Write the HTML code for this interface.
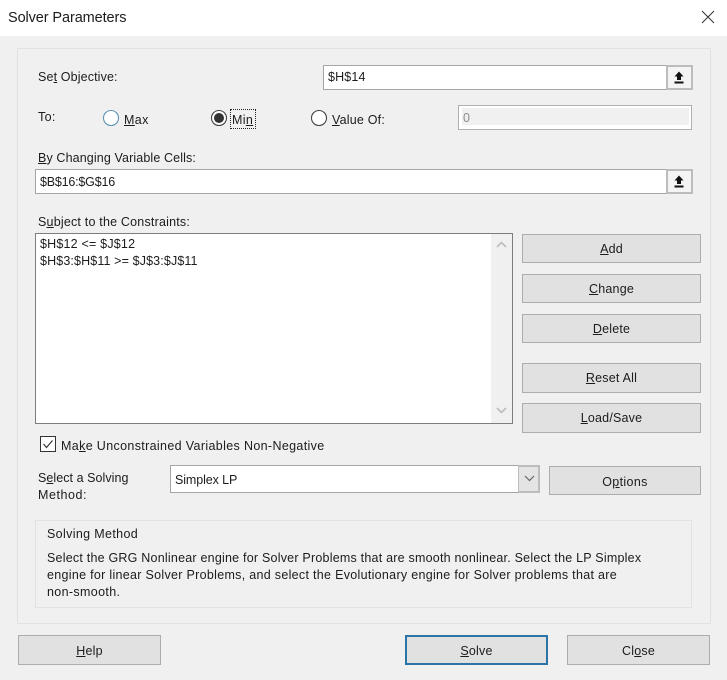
<!DOCTYPE html>
<html><head><meta charset="utf-8"><style>
html,body{margin:0;padding:0}
body{width:727px;height:680px;overflow:hidden;background:#f0f0f0;position:relative;font-family:"Liberation Sans",sans-serif;font-size:12.5px;color:#1c1c1c}
.b,.t,.btn{position:absolute;box-sizing:border-box}
.t{white-space:nowrap;line-height:16px;letter-spacing:.35px}
.in{background:#fff;border:1px solid #a5a5a5}
.btn{background:#e1e1e1;border:1px solid #adadad;text-align:center;letter-spacing:.2px;white-space:nowrap}
u{text-underline-offset:1px}
svg{position:absolute;display:block}
</style></head><body>
<div class="b" style="left:0;top:0;width:727px;height:36px;background:#fff"></div>
<div class="t" style="left:8px;top:9px;font-size:14.5px;line-height:18px;letter-spacing:-.1px">Solver Parameters</div>
<svg style="left:700px;top:9px" width="16" height="16" viewBox="0 0 16 16"><path d="M2 2L14 14M14 2L2 14" stroke="#333" stroke-width="1" fill="none"/></svg>
<div class="b" style="left:17px;top:48px;width:694px;height:576px;border:1px solid #e2e2e2"></div>

<div class="t" style="left:38px;top:69px;letter-spacing:.13px">Se<u>t</u> Objective:</div>
<div class="b in" style="left:323px;top:65px;width:369px;height:25px"></div>
<div class="t" style="left:328px;top:69px;letter-spacing:.15px">$H$14</div>
<div class="b" style="left:666px;top:65px;width:27px;height:25px;background:#f4f4f4;border:2px solid #bcbcbc"></div>
<svg style="left:672px;top:70px" width="14" height="15" viewBox="0 0 14 15"><path d="M7 1.5L11.5 6.5H9V10H5V6.5H2.5Z" fill="#111"/><rect x="2.5" y="11.5" width="9" height="2" fill="#111"/></svg>

<div class="t" style="left:38px;top:109px">To:</div>
<svg style="left:102px;top:109px" width="18" height="18"><circle cx="9" cy="9" r="7.5" fill="#fff" stroke="#5f93b5" stroke-width="1.1"/></svg>
<div class="t" style="left:124px;top:112px"><u>M</u>ax</div>
<svg style="left:210px;top:109px" width="18" height="18"><circle cx="9" cy="9" r="7.5" fill="#fff" stroke="#444" stroke-width="1.1"/><circle cx="9" cy="9" r="5" fill="#333"/></svg>
<div class="b" style="left:230px;top:109px;width:26px;height:20px;border:1px dotted #222"></div>
<div class="t" style="left:232px;top:112px">Mi<u>n</u></div>
<svg style="left:310px;top:109px" width="18" height="18"><circle cx="9" cy="9" r="7.5" fill="#fff" stroke="#444" stroke-width="1.1"/></svg>
<div class="t" style="left:332px;top:112px;letter-spacing:.2px"><u>V</u>alue Of:</div>
<div class="b" style="left:458px;top:105px;width:234px;height:25px;background:#fff;border:1px solid #b0b0b0"></div>
<div class="b" style="left:462px;top:108px;width:227px;height:17px;background:#f0f0f0"></div>
<div class="t" style="left:463px;top:110px;color:#8d8d8d">0</div>

<div class="t" style="left:38px;top:150px;letter-spacing:.12px"><u>B</u>y Changing Variable Cells:</div>
<div class="b in" style="left:35px;top:169px;width:657px;height:25px"></div>
<div class="t" style="left:40px;top:174px;letter-spacing:-.2px">$B$16:$G$16</div>
<div class="b" style="left:666px;top:169px;width:27px;height:25px;background:#f4f4f4;border:2px solid #bcbcbc"></div>
<svg style="left:672px;top:174px" width="14" height="15" viewBox="0 0 14 15"><path d="M7 1.5L11.5 6.5H9V10H5V6.5H2.5Z" fill="#111"/><rect x="2.5" y="11.5" width="9" height="2" fill="#111"/></svg>

<div class="t" style="left:38px;top:214px;letter-spacing:.2px">S<u>u</u>bject to the Constraints:</div>
<div class="b" style="left:35px;top:233px;width:478px;height:191px;background:#fff;border:1px solid #7d7d7d"></div>
<div class="b" style="left:491px;top:234px;width:21px;height:189px;background:#f0f0f0"></div>
<svg style="left:495px;top:240px" width="13" height="10"><path d="M2 7L6.5 2.5L11 7" fill="none" stroke="#bcbcbc" stroke-width="1.6"/></svg>
<svg style="left:495px;top:405px" width="13" height="10"><path d="M2 3L6.5 7.5L11 3" fill="none" stroke="#bcbcbc" stroke-width="1.6"/></svg>
<div class="t" style="left:40px;top:236px;letter-spacing:.2px">$H$12 &lt;= $J$12</div>
<div class="t" style="left:40px;top:253px;letter-spacing:.13px">$H$3:$H$11 &gt;= $J$3:$J$11</div>

<div class="btn" style="left:522px;top:234px;width:179px;height:29px;line-height:29px"><u>A</u>dd</div>
<div class="btn" style="left:522px;top:274px;width:179px;height:29px;line-height:29px"><u>C</u>hange</div>
<div class="btn" style="left:522px;top:314px;width:179px;height:29px;line-height:29px"><u>D</u>elete</div>
<div class="btn" style="left:522px;top:363px;width:179px;height:30px;line-height:29px"><u>R</u>eset All</div>
<div class="btn" style="left:522px;top:403px;width:179px;height:30px;line-height:29px"><u>L</u>oad/Save</div>

<div class="b" style="left:40px;top:436px;width:16px;height:16px;background:#fff;border:1px solid #333"></div>
<svg style="left:40px;top:436px" width="16" height="16"><path d="M3.5 8L6.5 11.5L12.5 4.5" fill="none" stroke="#333" stroke-width="1.2"/></svg>
<div class="t" style="left:61px;top:438px">Ma<u>k</u>e Unconstrained Variables Non-Negative</div>

<div class="t" style="left:38px;top:470px;letter-spacing:.05px">S<u>e</u>lect a Solving</div>
<div class="t" style="left:38px;top:487px;letter-spacing:.55px">Method:</div>
<div class="b in" style="left:170px;top:465px;width:370px;height:28px"></div>
<div class="t" style="left:175px;top:472px;letter-spacing:-.1px">Simplex LP</div>
<div class="b" style="left:518px;top:465px;width:22px;height:28px;background:#e4e4e4;border:2px solid #bcbcbc;border-left:1px solid #bcbcbc"></div>
<svg style="left:523px;top:474px" width="13" height="9"><path d="M2 2L6.5 6.5L11 2" fill="none" stroke="#666" stroke-width="1.2"/></svg>
<div class="btn" style="left:549px;top:466px;width:152px;height:29px;line-height:30px;letter-spacing:.35px">O<u>p</u>tions</div>

<div class="b" style="left:35px;top:520px;width:657px;height:88px;border:1px solid #e2e2e2"></div>
<div class="t" style="left:47px;top:526px">Solving Method</div>
<div class="t" style="left:47px;top:550px;letter-spacing:.22px">Select the GRG Nonlinear engine for Solver Problems that are smooth nonlinear. Select the LP Simplex</div>
<div class="t" style="left:47px;top:567px;letter-spacing:.3px">engine for linear Solver Problems, and select the Evolutionary engine for Solver problems that are</div>
<div class="t" style="left:47px;top:584px">non-smooth.</div>

<div class="btn" style="left:18px;top:635px;width:143px;height:30px;line-height:30px"><u>H</u>elp</div>
<div class="btn" style="left:405px;top:635px;width:143px;height:30px;line-height:28px;border:2px solid #2b74a8"><u>S</u>olve</div>
<div class="btn" style="left:567px;top:635px;width:143px;height:30px;line-height:30px">Cl<u>o</u>se</div>
</body></html>
